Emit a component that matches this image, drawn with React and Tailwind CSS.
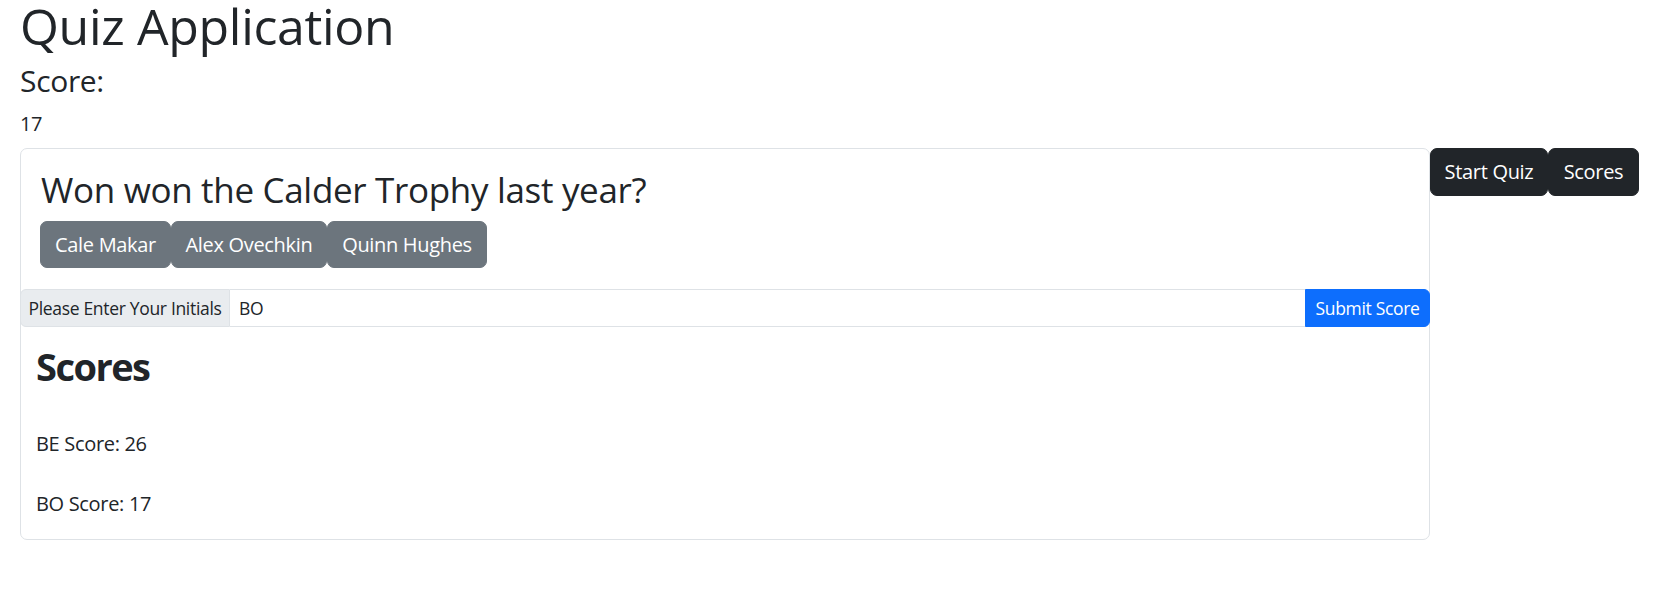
export default function App() {
  const answers = [
    { label: "Cale Makar", w: "w-[131px]" },
    { label: "Alex Ovechkin", w: "w-[156px]" },
    { label: "Quinn Hughes", w: "w-[160px]" },
  ];
  return (
    <div className="min-h-[590px] bg-white px-[20px] text-[#212529] font-['Open_Sans','Noto_Sans',sans-serif] tracking-[-0.02em]">
      <h1 className="text-[50px] leading-[52px] font-medium">Quiz Application</h1>
      <h4 className="mt-[11px] text-[30px] leading-[36px] font-medium">Score:</h4>
      <div className="mt-[10px] text-[20px] leading-[30px]">17</div>
      <div className="mt-[9px] flex items-start">
        <div className="w-[1410px] shrink-0 rounded-[7px] border border-[#dee2e6] bg-white">
          <div className="px-[20px] pt-[20px] pb-[21px]">
            <h3 className="text-[35px] leading-[42px] font-medium">Won won the Calder Trophy last year?</h3>
            <div className="mt-[10px] flex -ml-px">
              {answers.map((a) => (
                <button
                  key={a.label}
                  className={`${a.w} h-[47px] rounded-[7px] border border-[#6c757d] bg-[#6c757d] text-center text-[20px] leading-[30px] text-white`}
                >
                  {a.label}
                </button>
              ))}
            </div>
          </div>
          <div className="-mx-px flex h-[38px] text-[17.5px] leading-[26px]">
            <span className="flex w-[210px] shrink-0 items-center justify-center rounded-l-[6px] border border-[#dee2e6] bg-[#e9ecef] px-[10px] whitespace-nowrap">
              Please Enter Your Initials
            </span>
            <div className="flex flex-1 items-center border-y border-[#dee2e6] bg-white px-[9px]">BO</div>
            <button className="w-[125px] shrink-0 rounded-r-[6px] border border-[#0d6efd] bg-[#0d6efd] text-center text-white">
              Submit Score
            </button>
          </div>
          <div className="px-[15px] pt-[15px] pb-[20px]">
            <h2 className="text-[38px] leading-[48px] font-bold tracking-[-0.04em]">Scores</h2>
            <p className="mt-[39px] text-[20px] leading-[30px]">BE Score: 26</p>
            <p className="mt-[30px] text-[20px] leading-[30px]">BO Score: 17</p>
          </div>
        </div>
        <div className="flex">
          <button className="h-[48px] w-[118px] rounded-[7px] border border-[#212529] bg-[#212529] text-center text-[20px] leading-[30px] text-white">
            Start Quiz
          </button>
          <button className="h-[48px] w-[91px] rounded-[7px] border border-[#212529] bg-[#212529] text-center text-[20px] leading-[30px] text-white">
            Scores
          </button>
        </div>
      </div>
    </div>
  );
}
